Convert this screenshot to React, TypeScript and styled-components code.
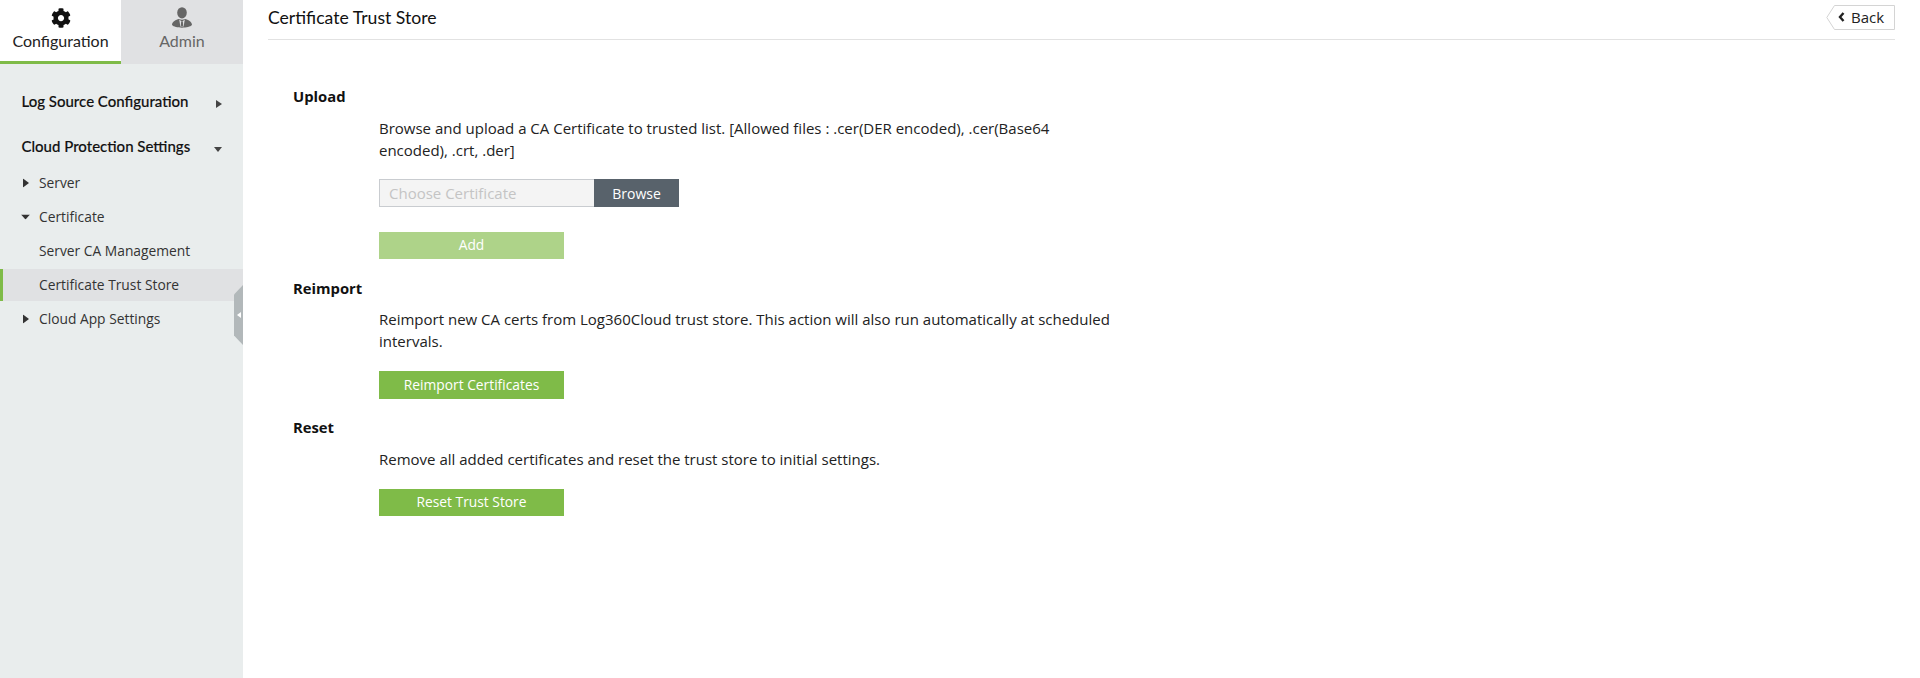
import React from "react";
import styled, { createGlobalStyle } from "styled-components";
import { FaCog } from "react-icons/fa";

const Global = createGlobalStyle`
  html, body { margin: 0; padding: 0; background: #fff; height: 100%; }
  body { font-family: "Open Sans", "Liberation Sans", sans-serif; color: #222; overflow: hidden; }
  * { box-sizing: border-box; }
`;

const Page = styled.div`display: flex; width: 1920px; height: 678px;`;
const Sidebar = styled.aside`position: relative; width: 243px; flex: none; background: #e9eded;`;
const Tabs = styled.div`display: flex; height: 64px;`;
const Tab = styled.div<{ $active?: boolean }>`
  width: ${p => (p.$active ? "121px" : "122px")};
  background: ${p => (p.$active ? "#fff" : "#e0e1e3")};
  border-bottom: 3px solid ${p => (p.$active ? "#7fbb48" : "#e0e1e3")};
  color: ${p => (p.$active ? "#222" : "#666")};
  font: 16px "Lato", sans-serif;
  display: flex; flex-direction: column; align-items: center;
  padding-top: 7px;
`;
const TabIcon = styled.div`height: 22px; display: flex; align-items: center; justify-content: center;`;
const TabLabel = styled.div`margin-top: 2px; line-height: 20px;`;
const Nav = styled.nav`padding-top: 14.5px;`;
const TopItem = styled.div`
  height: 45px; padding: 0 21px 0 21.5px; display: flex; align-items: center; justify-content: space-between;
  font: 500 15px "Lato", sans-serif; color: #111; -webkit-text-stroke: 0.15px #111;
`;
const SubList = styled.div`margin-top: -2.5px;`;
const SubItem = styled.div<{ $active?: boolean }>`
  height: ${p => (p.$active ? "32px" : "34px")};
  margin: ${p => (p.$active ? "1px 0" : "0")};
  display: flex; align-items: center; position: relative;
  padding: 0 0 1px ${p => (p.$active ? "36px" : "39px")};
  font-size: 13.8px; color: #333;
  background: ${p => (p.$active ? "#e0e1e3" : "transparent")};
  border-left: ${p => (p.$active ? "3px solid #7fbb48" : "none")};
`;
const Caret = styled.svg<{ $left: number }>`
  position: absolute; left: ${p => p.$left}px; top: 50%; transform: translateY(-50%);
`;
const TopCaret = styled.svg`flex: none; position: relative; top: 3px;`;
const Collapse = styled.div`
  position: absolute; right: 0; top: 285px; width: 9px; height: 60px; background: #b2b8ba;
  clip-path: polygon(100% 0, 100% 100%, 0 84%, 0 16%);
  display: flex; align-items: center; justify-content: center;
`;
const Main = styled.main`flex: 1; padding: 0 25px;`;
const Header = styled.header`
  height: 40px; border-bottom: 1px solid #e2e2e2; display: flex; justify-content: space-between; align-items: center;
  margin-bottom: 47px;
`;
const Title = styled.h1`margin: 0 0 4px; font: 400 17.6px "Lato", sans-serif; color: #111;`;
const BackWrap = styled.div`position: relative; width: 69px; height: 25px; margin-top: -5px;`;
const BackShape = styled.svg`position: absolute; inset: 0;`;
const BackLabel = styled.div`
  position: absolute; inset: 0; display: flex; align-items: center; padding: 0 0 1px 12px; gap: 6px;
  font-size: 15px; color: #222;
`;
const Section = styled.section<{ $top: number }>`margin-top: ${p => p.$top}px;`;
const SectionTitle = styled.h2`
  margin: 0; padding-left: 25px; font: 700 14.8px/18px "Open Sans", sans-serif; color: #111;
`;
const Body = styled.div<{ $top: number }>`padding: ${p => p.$top}px 0 0 111px;`;
const Desc = styled.p`margin: 0; width: 735px; font-size: 15px; line-height: 21.5px; color: #222;`;
const FileRow = styled.div`display: flex; height: 28px; margin-top: 18px;`;
const FileInput = styled.div`
  width: 215px; background: #f4f4f4; border: 1px solid #c9ccd0; border-right: none;
  color: #c4c4c4; font-size: 15px; padding-left: 9px; display: flex; align-items: center;
`;
const Browse = styled.div`
  width: 85px; background: #58626b; color: #fff; font-size: 14px; display: flex; align-items: center; justify-content: center;
`;
const Action = styled.div<{ $disabled?: boolean; $h?: number; $mt: number }>`
  width: 185px; height: ${p => p.$h ?? 27}px; margin-top: ${p => p.$mt}px; padding-bottom: 2px;
  background: ${p => (p.$disabled ? "#aed389" : "#7fbb48")};
  color: #fff; font-size: 13.8px; display: flex; align-items: center; justify-content: center;
`;

const CaretRight = ({ left }: { left: number }) => (
  <Caret $left={left} width="6" height="9" viewBox="0 0 6 9"><path d="M0 0 L6 4.5 L0 9Z" fill="#333" /></Caret>
);
const CaretDown = ({ left }: { left: number }) => (
  <Caret $left={left} width="9" height="5" viewBox="0 0 9 5"><path d="M0 0 H9 L4.5 5Z" fill="#333" /></Caret>
);

export default function App() {
  return (
    <Page>
      <Global />
      <Sidebar>
        <Tabs>
          <Tab $active>
            <TabIcon><FaCog size={20} color="#111" /></TabIcon>
            <TabLabel>Configuration</TabLabel>
          </Tab>
          <Tab>
            <TabIcon>
              <svg width="22" height="22" viewBox="0 0 22 22">
                <ellipse cx="11" cy="5.8" rx="4.8" ry="5.6" fill="#666" />
                <path d="M1 18 C1 14.5 5 12.8 8 12 C9.5 13 12.5 13 14 12 C17 12.8 21 14.5 21 18 C18 21.5 4 21.5 1 18Z" fill="#666" />
                <path d="M8.2 12.6 L11 14.8 L13.8 12.6 L12.6 19.5 H9.4Z" fill="#e0e1e3" />
                <path d="M10.2 14.6 H11.8 L12.2 18.5 L11 19.8 L9.8 18.5Z" fill="#666" />
              </svg>
            </TabIcon>
            <TabLabel>Admin</TabLabel>
          </Tab>
        </Tabs>
        <Nav>
          <TopItem>
            Log Source Configuration
            <TopCaret width="6" height="8" viewBox="0 0 6 8"><path d="M0 0 L6 4 L0 8Z" fill="#444" /></TopCaret>
          </TopItem>
          <TopItem>
            Cloud Protection Settings
            <TopCaret width="8" height="5" viewBox="0 0 8 5"><path d="M0 0 H8 L4 5Z" fill="#444" /></TopCaret>
          </TopItem>
          <SubList>
            <SubItem><CaretRight left={23} />Server</SubItem>
            <SubItem><CaretDown left={21} />Certificate</SubItem>
            <SubItem>Server CA Management</SubItem>
            <SubItem $active>Certificate Trust Store</SubItem>
            <SubItem><CaretRight left={23} />Cloud App Settings</SubItem>
          </SubList>
        </Nav>
        <Collapse>
          <svg width="4" height="6" viewBox="0 0 4 6"><path d="M4 0 V6 L0 3Z" fill="#fff" /></svg>
        </Collapse>
      </Sidebar>
      <Main>
        <Header>
          <Title>Certificate Trust Store</Title>
          <BackWrap>
            <BackShape width="69" height="25" viewBox="0 0 69 25">
              <path d="M8.5 0.5 H68.5 V24.5 H8.5 L0.8 12.5Z" fill="#fff" stroke="#d4d4d4" />
            </BackShape>
            <BackLabel>
              <svg width="7" height="10" viewBox="0 0 7 10"><path d="M5.5 1 L2 5 L5.5 9" fill="none" stroke="#222" strokeWidth="2.4" /></svg>
              Back
            </BackLabel>
          </BackWrap>
        </Header>
        <Section $top={0}>
          <SectionTitle>Upload</SectionTitle>
          <Body $top={13}>
            <Desc>
              Browse and upload a CA Certificate to trusted list. [Allowed files : .cer(DER encoded), .cer(Base64 encoded), .crt, .der]
            </Desc>
            <FileRow>
              <FileInput>Choose Certificate</FileInput>
              <Browse>Browse</Browse>
            </FileRow>
            <Action $disabled $mt={25}>Add</Action>
          </Body>
        </Section>
        <Section $top={20}>
          <SectionTitle>Reimport</SectionTitle>
          <Body $top={12}>
            <Desc>
              Reimport new CA certs from Log360Cloud trust store. This action will also run automatically at scheduled intervals.
            </Desc>
            <Action $mt={19} $h={28}>Reimport Certificates</Action>
          </Body>
        </Section>
        <Section $top={18.5}>
          <SectionTitle>Reset</SectionTitle>
          <Body $top={13.5}>
            <Desc>Remove all added certificates and reset the trust store to initial settings.</Desc>
            <Action $mt={18.5}>Reset Trust Store</Action>
          </Body>
        </Section>
      </Main>
    </Page>
  );
}
